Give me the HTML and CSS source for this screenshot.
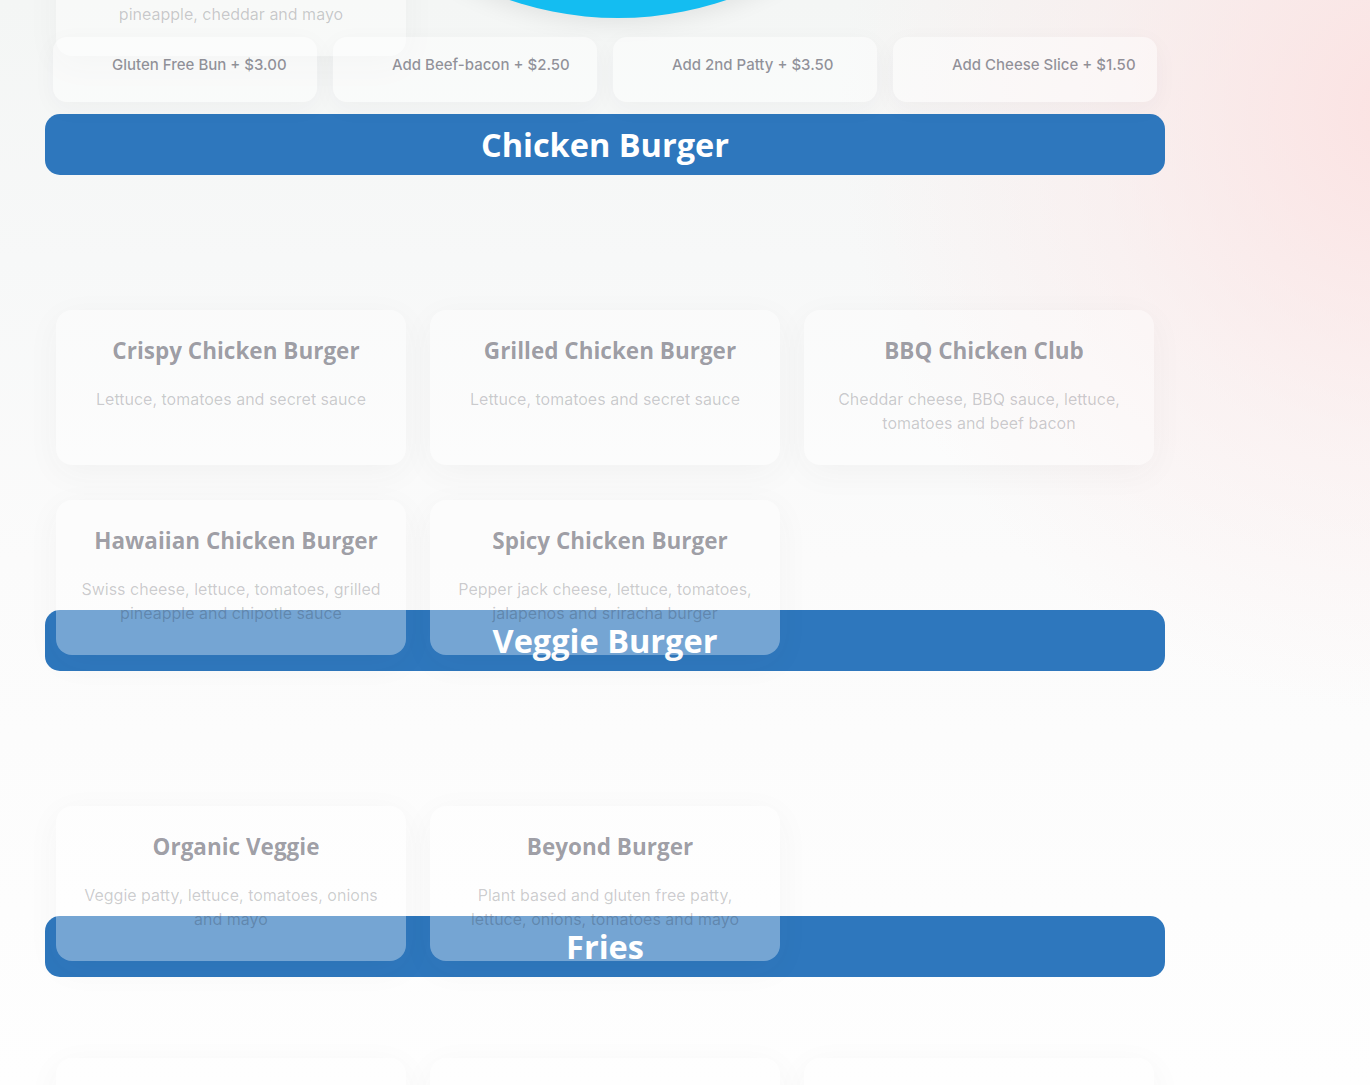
FILE: index.html
```html
<!DOCTYPE html>
<html lang="en">
<head>
<meta charset="utf-8">
<title>Menu</title>
<link rel="stylesheet" href="styles.css">
</head>
<body>
<div class="hero-circle"></div>
<main class="page">
  <div class="grid grid-prev">
    <div class="card">
      <h3 class="card-title">Hawaiian Burger</h3>
      <p class="card-desc">Swiss cheese, lettuce, tomatoes, grilled pineapple, cheddar and mayo</p>
    </div>
  </div>

  <div class="addons">
    <div class="addon">Gluten Free Bun + $3.00</div>
    <div class="addon">Add Beef-bacon + $2.50</div>
    <div class="addon">Add 2nd Patty + $3.50</div>
    <div class="addon">Add Cheese Slice + $1.50</div>
  </div>

  <h2 class="bar">Chicken Burger</h2>
  <div class="grid">
    <div class="card">
      <h3 class="card-title">Crispy Chicken Burger</h3>
      <p class="card-desc">Lettuce, tomatoes and secret sauce</p>
    </div>
    <div class="card">
      <h3 class="card-title">Grilled Chicken Burger</h3>
      <p class="card-desc">Lettuce, tomatoes and secret sauce</p>
    </div>
    <div class="card">
      <h3 class="card-title">BBQ Chicken Club</h3>
      <p class="card-desc">Cheddar cheese, BBQ sauce, lettuce, tomatoes and beef bacon</p>
    </div>
    <div class="card">
      <h3 class="card-title">Hawaiian Chicken Burger</h3>
      <p class="card-desc">Swiss cheese, lettuce, tomatoes, grilled pineapple and chipotle sauce</p>
    </div>
    <div class="card">
      <h3 class="card-title">Spicy Chicken Burger</h3>
      <p class="card-desc">Pepper jack cheese, lettuce, tomatoes, jalapenos and sriracha burger</p>
    </div>
  </div>

  <h2 class="bar">Veggie Burger</h2>
  <div class="grid">
    <div class="card">
      <h3 class="card-title">Organic Veggie</h3>
      <p class="card-desc">Veggie patty, lettuce, tomatoes, onions and mayo</p>
    </div>
    <div class="card">
      <h3 class="card-title">Beyond Burger</h3>
      <p class="card-desc">Plant based and gluten free patty, lettuce, onions, tomatoes and mayo</p>
    </div>
  </div>

  <h2 class="bar">Fries</h2>
  <div class="grid grid-late">
    <div class="card">
      <h3 class="card-title">Regular Fries</h3>
      <p class="card-desc">Crispy golden fries</p>
    </div>
    <div class="card">
      <h3 class="card-title">Cajun Fries</h3>
      <p class="card-desc">Seasoned with cajun spice</p>
    </div>
    <div class="card">
      <h3 class="card-title">Cheese Fries</h3>
      <p class="card-desc">Topped with melted cheese</p>
    </div>
  </div>
</main>
</body>
</html>
```
FILE: styles.css
```css
html, body {
  margin: 0;
  padding: 0;
}

body {
  min-height: 1085px;
  overflow: hidden;
  font-family: "Open Sans", "Liberation Sans", sans-serif;
  background:
    radial-gradient(ellipse 560px 600px at 1400px 110px, rgba(252, 224, 224, 0.9) 0%, rgba(252, 230, 230, 0.4) 55%, rgba(255, 255, 255, 0) 100%),
    linear-gradient(180deg, #f4f6f5 0px, #f7f8f8 260px, #fbfbfb 560px, #fefefe 1085px);
  position: relative;
}

.hero-circle {
  position: absolute;
  left: 282px;
  top: -654px;
  width: 672px;
  height: 672px;
  border-radius: 50%;
  background: #14bdf1;
  box-shadow: 0 6px 22px rgba(0, 0, 0, 0.08);
}

.page {
  width: 1120px;
  margin-left: 45px;
}

.grid {
  display: grid;
  grid-template-columns: repeat(3, 1fr);
  column-gap: 24px;
  row-gap: 35px;
  padding: 0 11px;
  margin-top: 35px;
  margin-bottom: 55px;
}

.grid-prev {
  margin-top: -199px;
  margin-bottom: 0;
}

.card {
  position: relative;
  height: 155px;
  box-sizing: border-box;
  padding-top: 28px;
  border-radius: 16px;
  background: rgba(255, 255, 255, 0.34);
  box-shadow: 0 8px 34px rgba(60, 60, 80, 0.045);
  transform: translateY(100px);
  text-align: center;
}

.grid-late .card {
  transform: translateY(46px);
  background: rgba(255, 255, 255, 0.25);
}

.card-title {
  margin: 0;
  padding-left: 10px;
  font-family: "Open Sans", sans-serif;
  font-weight: 700;
  font-size: 22.5px;
  line-height: 26px;
  color: rgba(40, 40, 56, 0.45);
}

.card-desc {
  margin: 23px 0 0;
  padding: 0 22px;
  font-family: Inter, Roboto, sans-serif;
  font-size: 16px;
  line-height: 24px;
  color: rgba(30, 30, 46, 0.23);
}

.addons {
  display: grid;
  grid-template-columns: repeat(4, 1fr);
  column-gap: 16px;
  padding: 0 8px;
  margin-top: 81px;
}

.addon {
  position: relative;
  height: 65px;
  box-sizing: border-box;
  padding: 19px 0 0 59px;
  border-radius: 14px;
  background: rgba(255, 255, 255, 0.45);
  box-shadow: 0 6px 24px rgba(60, 60, 80, 0.04);
  font-family: Inter, Roboto, sans-serif;
  font-weight: 500;
  font-size: 15px;
  line-height: 18px;
  color: rgba(40, 40, 56, 0.5);
  white-space: nowrap;
}

.bar {
  height: 61px;
  margin: 12px 0 0;
  border-radius: 15px;
  background: #2e77bd;
  color: #ffffff;
  font-family: "Open Sans", sans-serif;
  font-weight: 700;
  font-size: 32.5px;
  line-height: 61px;
  text-align: center;
}

.grid + .bar {
  margin-top: 0;
}
```
